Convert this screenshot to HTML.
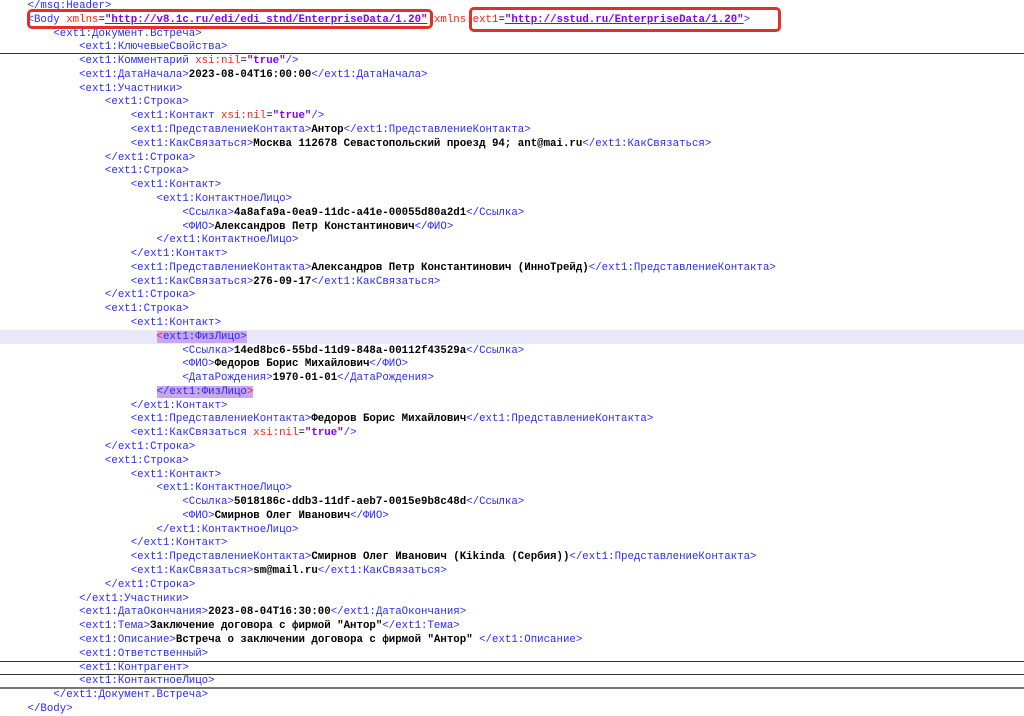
<!DOCTYPE html>
<html><head><meta charset="utf-8">
<style>
html,body{margin:0;padding:0;background:#fff;width:1024px;height:716px;overflow:hidden;position:relative}
pre{position:absolute;left:27.5px;top:0px;margin:0;font-family:"Liberation Mono","DejaVu Sans Mono",monospace;font-size:10.75px;line-height:13.78px;color:#000;z-index:2}
.t{color:#2a2aff}
.a{color:#ff1a1a}
.v{color:#8000ff;font-weight:bold}
.x{font-weight:bold}
.u{text-decoration:underline}
.hl{background:#c9a6ef}
.hr{position:absolute;left:0;width:1024px;height:1px;background:#333;z-index:1}
.box{position:absolute;border:3px solid #e0302c;border-radius:5px;z-index:3}
.row{position:absolute;left:0;width:1024px;top:330px;height:14px;background:#e8e8fb;z-index:0}
</style></head><body>
<div class="row"></div>
<div class="hr" style="top:53px"></div>
<div class="hr" style="top:661px"></div>
<div class="hr" style="top:674px"></div>
<div class="hr" style="top:687px;height:2px;background:#777"></div>
<div class="box" style="left:27px;top:9px;width:400px;height:14px"></div>
<div class="box" style="left:469px;top:7px;width:306px;height:19px"></div>
<pre><span class="t">&lt;/msg:Header&gt;</span>
<span class="t">&lt;Body</span> <span class="a">xmlns</span>=<span class="v u">"http://v8.1c.ru/edi/edi_stnd/EnterpriseData/1.20"</span> <span class="a">xmlns:ext1</span>=<span class="v u">"http://sstud.ru/EnterpriseData/1.20"</span><span class="t">&gt;</span>
    <span class="t">&lt;ext1:Документ.Встреча&gt;</span>
        <span class="t">&lt;ext1:КлючевыеСвойства&gt;</span>
        <span class="t">&lt;ext1:Комментарий</span> <span class="a">xsi:nil</span>=<span class="v">"true"</span><span class="t">/&gt;</span>
        <span class="t">&lt;ext1:ДатаНачала&gt;</span><span class="x">2023-08-04T16:00:00</span><span class="t">&lt;/ext1:ДатаНачала&gt;</span>
        <span class="t">&lt;ext1:Участники&gt;</span>
            <span class="t">&lt;ext1:Строка&gt;</span>
                <span class="t">&lt;ext1:Контакт</span> <span class="a">xsi:nil</span>=<span class="v">"true"</span><span class="t">/&gt;</span>
                <span class="t">&lt;ext1:ПредставлениеКонтакта&gt;</span><span class="x">Антор</span><span class="t">&lt;/ext1:ПредставлениеКонтакта&gt;</span>
                <span class="t">&lt;ext1:КакСвязаться&gt;</span><span class="x">Москва 112678 Севастопольский проезд 94; ant@mai.ru</span><span class="t">&lt;/ext1:КакСвязаться&gt;</span>
            <span class="t">&lt;/ext1:Строка&gt;</span>
            <span class="t">&lt;ext1:Строка&gt;</span>
                <span class="t">&lt;ext1:Контакт&gt;</span>
                    <span class="t">&lt;ext1:КонтактноеЛицо&gt;</span>
                        <span class="t">&lt;Ссылка&gt;</span><span class="x">4a8afa9a-0ea9-11dc-a41e-00055d80a2d1</span><span class="t">&lt;/Ссылка&gt;</span>
                        <span class="t">&lt;ФИО&gt;</span><span class="x">Александров Петр Константинович</span><span class="t">&lt;/ФИО&gt;</span>
                    <span class="t">&lt;/ext1:КонтактноеЛицо&gt;</span>
                <span class="t">&lt;/ext1:Контакт&gt;</span>
                <span class="t">&lt;ext1:ПредставлениеКонтакта&gt;</span><span class="x">Александров Петр Константинович (ИнноТрейд)</span><span class="t">&lt;/ext1:ПредставлениеКонтакта&gt;</span>
                <span class="t">&lt;ext1:КакСвязаться&gt;</span><span class="x">276-09-17</span><span class="t">&lt;/ext1:КакСвязаться&gt;</span>
            <span class="t">&lt;/ext1:Строка&gt;</span>
            <span class="t">&lt;ext1:Строка&gt;</span>
                <span class="t">&lt;ext1:Контакт&gt;</span>
                    <span class="hl"><span style="color:#ff1a1a">&lt;</span><span class="t">ext1:ФизЛицо&gt;</span></span>
                        <span class="t">&lt;Ссылка&gt;</span><span class="x">14ed8bc6-55bd-11d9-848a-00112f43529a</span><span class="t">&lt;/Ссылка&gt;</span>
                        <span class="t">&lt;ФИО&gt;</span><span class="x">Федоров Борис Михайлович</span><span class="t">&lt;/ФИО&gt;</span>
                        <span class="t">&lt;ДатаРождения&gt;</span><span class="x">1970-01-01</span><span class="t">&lt;/ДатаРождения&gt;</span>
                    <span class="hl"><span class="t">&lt;/ext1:ФизЛицо</span><span style="color:#ff1a1a">&gt;</span></span>
                <span class="t">&lt;/ext1:Контакт&gt;</span>
                <span class="t">&lt;ext1:ПредставлениеКонтакта&gt;</span><span class="x">Федоров Борис Михайлович</span><span class="t">&lt;/ext1:ПредставлениеКонтакта&gt;</span>
                <span class="t">&lt;ext1:КакСвязаться</span> <span class="a">xsi:nil</span>=<span class="v">"true"</span><span class="t">/&gt;</span>
            <span class="t">&lt;/ext1:Строка&gt;</span>
            <span class="t">&lt;ext1:Строка&gt;</span>
                <span class="t">&lt;ext1:Контакт&gt;</span>
                    <span class="t">&lt;ext1:КонтактноеЛицо&gt;</span>
                        <span class="t">&lt;Ссылка&gt;</span><span class="x">5018186c-ddb3-11df-aeb7-0015e9b8c48d</span><span class="t">&lt;/Ссылка&gt;</span>
                        <span class="t">&lt;ФИО&gt;</span><span class="x">Смирнов Олег Иванович</span><span class="t">&lt;/ФИО&gt;</span>
                    <span class="t">&lt;/ext1:КонтактноеЛицо&gt;</span>
                <span class="t">&lt;/ext1:Контакт&gt;</span>
                <span class="t">&lt;ext1:ПредставлениеКонтакта&gt;</span><span class="x">Смирнов Олег Иванович (Kikinda (Сербия))</span><span class="t">&lt;/ext1:ПредставлениеКонтакта&gt;</span>
                <span class="t">&lt;ext1:КакСвязаться&gt;</span><span class="x">sm@mail.ru</span><span class="t">&lt;/ext1:КакСвязаться&gt;</span>
            <span class="t">&lt;/ext1:Строка&gt;</span>
        <span class="t">&lt;/ext1:Участники&gt;</span>
        <span class="t">&lt;ext1:ДатаОкончания&gt;</span><span class="x">2023-08-04T16:30:00</span><span class="t">&lt;/ext1:ДатаОкончания&gt;</span>
        <span class="t">&lt;ext1:Тема&gt;</span><span class="x">Заключение договора с фирмой "Антор"</span><span class="t">&lt;/ext1:Тема&gt;</span>
        <span class="t">&lt;ext1:Описание&gt;</span><span class="x">Встреча о заключении договора с фирмой "Антор" </span><span class="t">&lt;/ext1:Описание&gt;</span>
        <span class="t">&lt;ext1:Ответственный&gt;</span>
        <span class="t">&lt;ext1:Контрагент&gt;</span>
        <span class="t">&lt;ext1:КонтактноеЛицо&gt;</span>
    <span class="t">&lt;/ext1:Документ.Встреча&gt;</span>
<span class="t">&lt;/Body&gt;</span></pre>
</body></html>
